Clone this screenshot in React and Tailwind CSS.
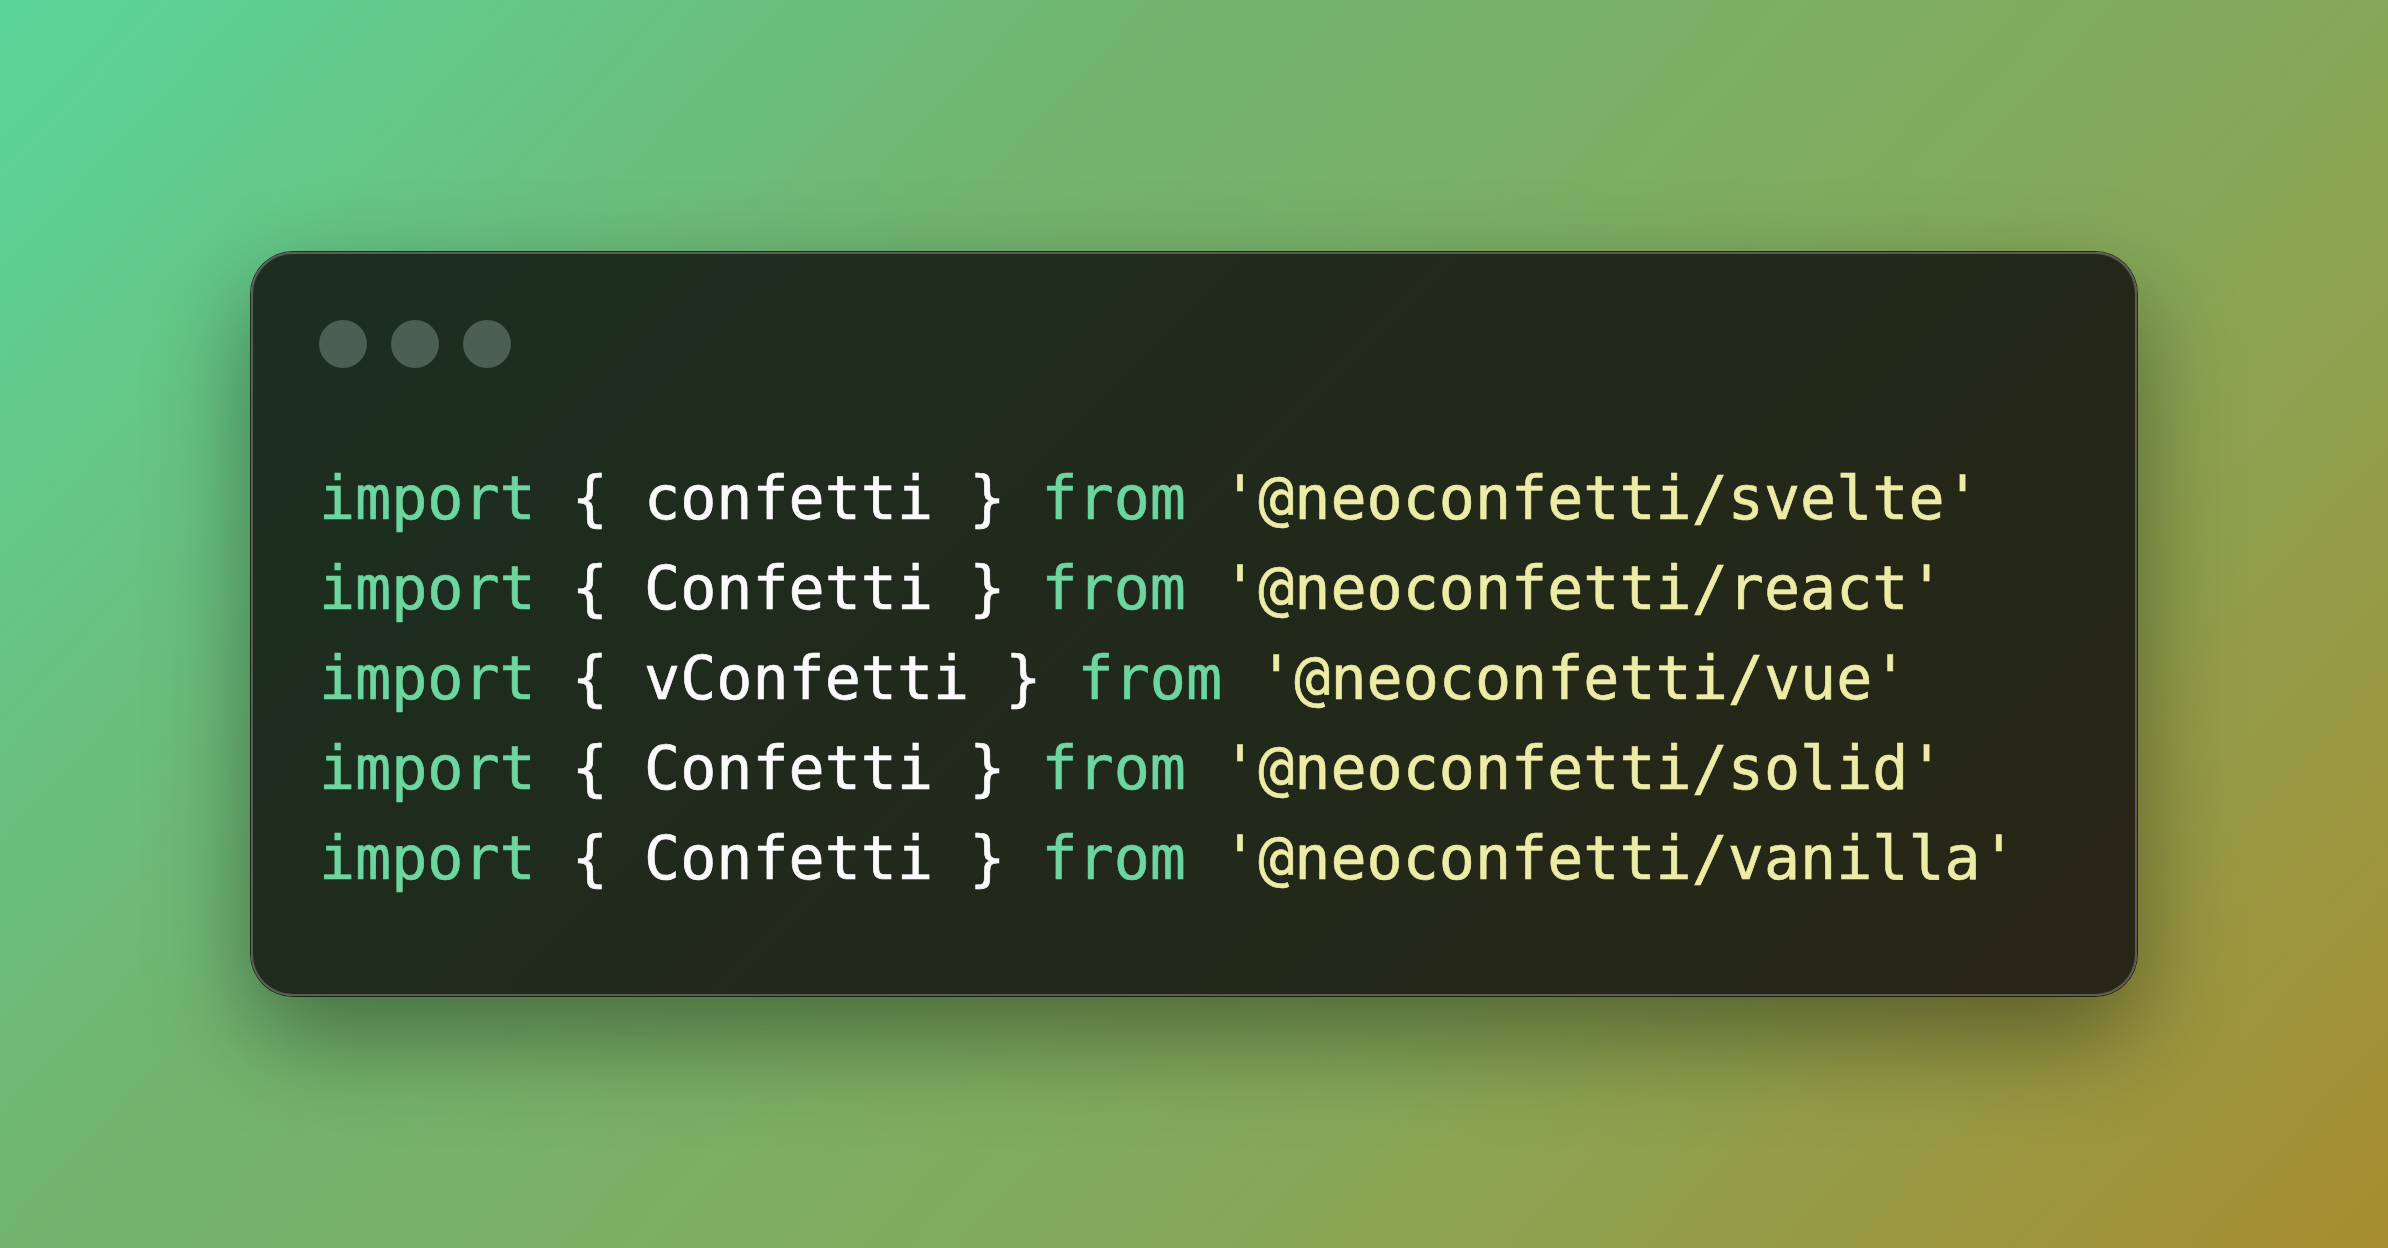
import React from "react";

const lines = [
  { name: "confetti", pkg: "svelte" },
  { name: "Confetti", pkg: "react" },
  { name: "vConfetti", pkg: "vue" },
  { name: "Confetti", pkg: "solid" },
  { name: "Confetti", pkg: "vanilla" },
];

export default function App() {
  return (
    <div className="h-[1248px] w-full flex items-center justify-center bg-[linear-gradient(133deg,#5ad59a_0%,#72b570_33%,#86a858_67%,#a88c30_100%)]">

      {/* Code window */}
      <div className="w-[1886px] rounded-[42px] border-2 border-[#5c5c55] ring-1 ring-black/70 bg-[linear-gradient(135deg,#1b2f20_0%,#21291b_50%,#282616_100%)] shadow-[0_40px_100px_rgba(0,0,0,0.4)] pt-[66px] pb-[91px] px-[66px]">

        <div className="flex items-center gap-6">
          <div className="w-12 h-12 rounded-full bg-[#4b5f52]" />
          <div className="w-12 h-12 rounded-full bg-[#4b5f52]" />
          <div className="w-12 h-12 rounded-full bg-[#4b5f52]" />
        </div>

        <div className="mt-[85px] font-['DejaVu_Sans_Mono','Liberation_Mono',monospace] text-[60px] leading-[90px] whitespace-pre [-webkit-text-stroke:0.6px_currentColor]">
          {lines.map((l, i) => (
            <div key={i}>
              <span className="text-[#6dd6a0]">import</span>
              <span className="text-[#fafafa]">{` { ${l.name} } `}</span>
              <span className="text-[#6dd6a0]">from</span>
              <span className="text-[#ececa6]">{` '@neoconfetti/${l.pkg}'`}</span>
            </div>
          ))}
        </div>

      </div>
    </div>
  );
}
